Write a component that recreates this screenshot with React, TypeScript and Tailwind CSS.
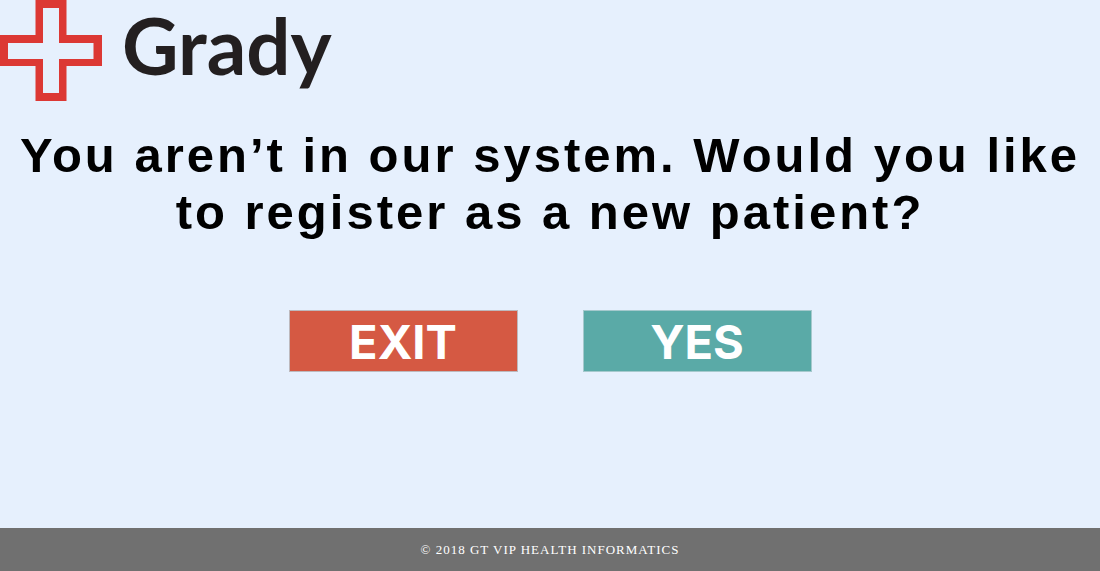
function CrossMark() {
  return (
    <svg className="h-[101px] w-[102px] shrink-0" viewBox="0 0 102 101" fill="#dc3834" aria-hidden="true">
      <path
        fillRule="evenodd"
        d="M35.5 0H66.5V35H102V66H66.5V101H35.5V66H0V35H35.5Z M43 8V43H8V59H43V93H59V59H93.5V43H59V8Z"
      />
    </svg>
  );
}

export default function App() {
  return (
    <div className="flex min-h-screen flex-col bg-[#e6f0fd] font-['Liberation_Sans',sans-serif]">
      <header className="flex items-start">
        <a href="#" className="flex items-start gap-5" aria-label="Grady">
          <CrossMark />
          <span className="font-['Lato',sans-serif] text-[78px] leading-[90px] font-bold text-[#231f20]">
            Grady
          </span>
        </a>
      </header>
      <main className="flex grow flex-col items-center pt-[26px]">
        <h1 className="px-4 text-center text-[49px] leading-[57px] font-bold tracking-[3px] text-black">
          You aren’t in our system. Would you like to register as a new patient?
        </h1>
        <div className="mt-[69px] mb-8 flex flex-wrap justify-center gap-[65px] font-['Inter',sans-serif] text-[47px] font-bold text-white">
          <button type="button" className="h-[62px] w-[229px] border border-[#bdb9bd] bg-[#d55943] pt-[2px] leading-[58px]">
            EXIT
          </button>
          <button type="button" className="h-[62px] w-[229px] border border-[#a5c9cd] bg-[#5aaaa7] pt-[2px] leading-[58px]">
            YES
          </button>
        </div>
      </main>
      <footer className="bg-[#707070] pt-3 pb-[11px] text-center font-['Liberation_Serif',serif] text-[13px] leading-5 tracking-[1px] text-white">
        © 2018 GT VIP HEALTH INFORMATICS
      </footer>
    </div>
  );
}
